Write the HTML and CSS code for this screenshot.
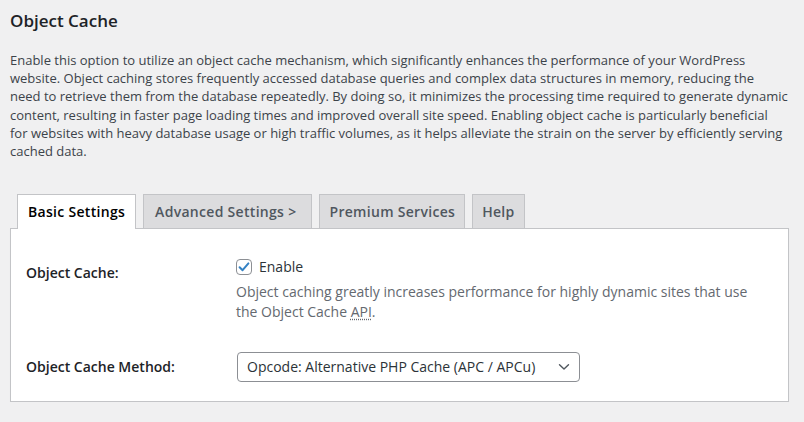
FILE: index.html
```html
<!DOCTYPE html>
<html lang="en">
<head>
<meta charset="utf-8">
<title>Object Cache</title>
<link rel="stylesheet" href="styles.css">
</head>
<body>
<div class="wrap">
  <h2 class="page-title">Object Cache</h2>
  <p class="intro">Enable this option to utilize an object cache mechanism, which significantly enhances the performance of your WordPress<br>website. Object caching stores frequently accessed database queries and complex data structures in memory, reducing the<br>need to retrieve them from the database repeatedly. By doing so, it minimizes the processing time required to generate dynamic<br>content, resulting in faster page loading times and improved overall site speed. Enabling object cache is particularly beneficial<br>for websites with heavy database usage or high traffic volumes, as it helps alleviate the strain on the server by efficiently serving<br>cached data.</p>

  <nav class="tabs">
    <a class="tab tab-active" href="#">Basic Settings</a>
    <a class="tab tab-more" href="#">Advanced Settings &gt;</a>
    <a class="tab" href="#">Premium Services</a>
    <a class="tab" href="#">Help</a>
  </nav>

  <div class="panel">
    <div class="row row-cache">
      <div class="row-label">Object Cache:</div>
      <div class="row-field">
        <label class="check">
          <input type="checkbox" class="check-box" checked>
          <span>Enable</span>
        </label>
        <p class="description">Object caching greatly increases performance for highly dynamic sites that use the Object Cache <abbr title="Application Programming Interface">API</abbr>.</p>
      </div>
    </div>
    <div class="row row-method">
      <div class="row-label">Object Cache Method:</div>
      <div class="row-field">
        <select class="select">
          <option>Opcode: Alternative PHP Cache (APC / APCu)</option>
        </select>
      </div>
    </div>
  </div>
</div>
</body>
</html>
```
FILE: styles.css
```css
html, body {
  margin: 0;
  padding: 0;
  background: #f0f0f1;
}

body {
  font-family: "Open Sans", "Liberation Sans", sans-serif;
  color: #3c434a;
}

.wrap {
  padding: 0 15px 0 10px;
}

.page-title {
  margin: 10px 0 0;
  font-size: 17px;
  line-height: 22px;
  font-weight: 600;
  color: #1d2327;
}

.intro {
  margin: 19px -10px 0 0;
  font-size: 13px;
  line-height: 18.2px;
  color: #3c434a;
}

.tabs {
  display: flex;
  gap: 7px;
  margin-top: 34px;
  padding-left: 7px;
}

.tab {
  display: block;
  padding: 5px 9px;
  border: 1px solid #c3c4c7;
  border-bottom: none;
  background: #dcdcde;
  color: #50575e;
  font-size: 14px;
  line-height: 24px;
  font-weight: 600;
  letter-spacing: 0.3px;
  text-decoration: none;
  white-space: nowrap;
}

.tab-more {
  padding-left: 11px;
  padding-right: 15px;
}

.tab-active {
  position: relative;
  z-index: 2;
  padding: 5px 10px;
  background: #fff;
  color: #000;
}

.panel {
  position: relative;
  z-index: 1;
  margin-top: -1px;
  background: #fff;
  border: 1px solid #c3c4c7;
  box-shadow: 0 1px 1px rgba(0, 0, 0, 0.04);
  padding: 0 15px 19px;
}

.row {
  display: grid;
  grid-template-columns: 210px 1fr;
}

.row-field {
  padding-right: 10px;
}

.row-cache {
  padding-top: 28px;
}

.row-method {
  padding-top: 30px;
  align-items: center;
}

.row-label {
  font-size: 14px;
  line-height: 20px;
  font-weight: 600;
  color: #1d2327;
}

.row-cache .row-label {
  padding-top: 6px;
}

.check {
  display: flex;
  align-items: center;
  gap: 7px;
  height: 20px;
  font-size: 14px;
  line-height: 20px;
  color: #2c3338;
}

.check-box {
  appearance: none;
  -webkit-appearance: none;
  margin: 0;
  width: 16px;
  height: 16px;
  border: 1px solid #8c8f94;
  border-radius: 4px;
  background: #fff url("data:image/svg+xml;utf8,<svg xmlns='http://www.w3.org/2000/svg' width='14' height='14' viewBox='0 0 14 14'><path d='M2.6 7.2 L5.6 10.2 L11.4 3.4' fill='none' stroke='%233582c4' stroke-width='2' stroke-linecap='round' stroke-linejoin='round'/></svg>") center / 14px 14px no-repeat;
}

.description {
  margin: 5px 0 0;
  font-size: 14px;
  line-height: 20px;
  color: #646970;
}

.description abbr {
  text-decoration: underline dotted;
  text-underline-offset: 2px;
}

.select {
  appearance: none;
  -webkit-appearance: none;
  display: block;
  margin: 0 0 0 1px;
  width: 343px;
  height: 30px;
  padding: 0 24px 0 9px;
  border: 1px solid #8c8f94;
  border-radius: 4px;
  font-family: "Open Sans", "Liberation Sans", sans-serif;
  font-size: 14px;
  line-height: 28px;
  color: #2c3338;
  background: #fff url("data:image/svg+xml;utf8,<svg xmlns='http://www.w3.org/2000/svg' width='12' height='8' viewBox='0 0 12 8'><path d='M1.5 1.8 L6 6 L10.5 1.8' fill='none' stroke='%2350575e' stroke-width='1.4' stroke-linecap='round' stroke-linejoin='round'/></svg>") right 9px center / 12px 8px no-repeat;
}
```
